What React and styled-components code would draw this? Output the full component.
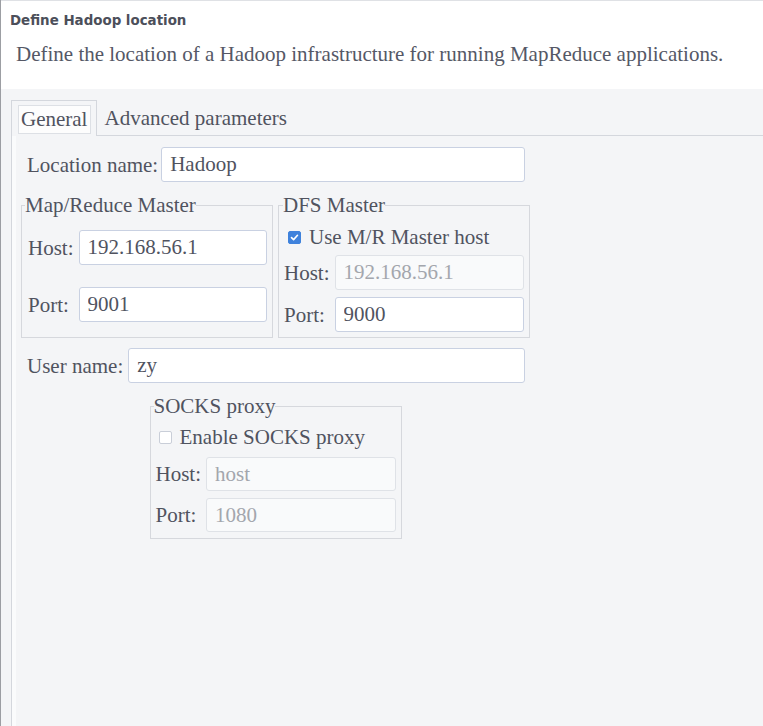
import React from "react";
import styled, { createGlobalStyle } from "styled-components";

const GlobalStyle = createGlobalStyle`
  html, body { margin: 0; padding: 0; background: #f4f5f7; }
  * { box-sizing: border-box; }
`;

const serif = `"Liberation Serif", "Times New Roman", serif`;
const textColor = "#50535f";

const Window = styled.div`
  width: 763px;
  height: 726px;
  overflow: hidden;
  display: flex;
  flex-direction: column;
  background: #f4f5f7;
  border-left: 1px solid #9c9ea3;
  font-family: ${serif};
  color: ${textColor};
`;

const Header = styled.header`
  height: 89px;
  flex: none;
  background: #ffffff;
  border-top: 1px solid #dfe1e5;
  padding: 11px 0 0 9px;
`;

const Title = styled.h1`
  margin: 0;
  font-family: "DejaVu Sans", sans-serif;
  font-weight: bold;
  font-size: 13.4px;
  line-height: 17px;
  color: #4c4f5a;
`;

const Description = styled.p`
  margin: 12px 0 0 6px;
  font-size: 21px;
  line-height: 26px;
  color: #555866;
`;

const Body = styled.div`
  flex: 1;
  padding: 11px 0 0 10px;
  display: flex;
`;

const TabFolder = styled.div`
  flex: 1;
  display: flex;
  flex-direction: column;
  border-left: 1px solid #d4d7dd;
`;

const TabBar = styled.div`
  height: 36px;
  flex: none;
  display: flex;
  align-items: stretch;
  border-bottom: 1px solid #d4d7dd;
`;

const Tab = styled.div`
  display: flex;
  align-items: center;
  font-size: 21px;
  line-height: 24px;
  color: ${textColor};
  ${(p) =>
    p.$active
      ? `
    padding: 3px 5px 2px 6px;
    border-top: 1px solid #d4d7dd;
    border-right: 1px solid #d4d7dd;
    margin-bottom: -1px;
    background: #f4f5f7;
  `
      : `
    padding: 1px 8px 0 7px;
  `}
`;

const FocusBox = styled.span`
  display: flex;
  align-items: center;
  height: 29px;
  padding: 0 3px 0 2px;
  background: #fdfdfd;
  border: 1px solid #dde0e5;
`;

const Panel = styled.div`
  flex: 1;
  border-left: 4px solid #fafbfc;
  padding: 11px 0 0 5px;
`;

const Form = styled.div`
  width: 509px;
  display: flex;
  flex-direction: column;
`;

const FieldRow = styled.div`
  display: grid;
  grid-template-columns: auto 1fr;
  column-gap: ${(p) => p.$gap || 3}px;
  align-items: center;
  padding: 0 5px 0 6px;
  margin-top: ${(p) => p.$top || 0}px;
`;

const Label = styled.label`
  font-size: 21px;
  line-height: 24px;
  white-space: nowrap;
  color: ${textColor};
`;

const Input = styled.input`
  height: ${(p) => p.$h || 35}px;
  width: 100%;
  min-width: 0;
  padding: 0 8px;
  border-radius: 3px;
  font-family: ${serif};
  font-size: 21px;
  outline: none;
  color: ${textColor};
  background: #ffffff;
  border: 1px solid #c9d1e2;
  &:disabled {
    background: #f9fafb;
    border-color: #dfe2e7;
    color: #a3a6ad;
  }
  &::placeholder {
    color: #a3a6ad;
  }
`;

const Groups = styled.div`
  display: grid;
  grid-template-columns: 1fr 1fr;
  column-gap: 5px;
  margin-top: 11px;
`;

const Group = styled.fieldset`
  margin: 0;
  border: 1px solid #d6d8dd;
  padding: ${(p) => p.$pad || "8px 5px 5px 5px"};
  width: ${(p) => (p.$w ? `${p.$w}px` : "auto")};
  ${(p) => (p.$center ? "margin: 11px auto 0;" : "")}
  min-width: 0;
`;

const Legend = styled.legend`
  padding: 0;
  margin-left: ${(p) => p.$shift || 0}px;
  font-size: 21px;
  line-height: 24px;
  color: ${textColor};
`;

const Grid = styled.div`
  display: grid;
  grid-template-columns: auto 1fr;
  column-gap: ${(p) => p.$gap || 5}px;
  row-gap: ${(p) => p.$rowGap || 7}px;
  align-items: center;
`;

const CheckRow = styled.label`
  display: flex;
  align-items: center;
  gap: 8px;
  height: 24px;
  margin: 0 0 ${(p) => p.$below || 6}px ${(p) => p.$indent || 4}px;
  font-size: 21px;
  line-height: 24px;
  color: ${textColor};
`;

const Box = styled.span`
  width: 13px;
  height: 13px;
  flex: none;
  border-radius: 2px;
  display: flex;
  align-items: center;
  justify-content: center;
  background: ${(p) => (p.$checked ? "#3f82dc" : "#ffffff")};
  border: 1px solid ${(p) => (p.$checked ? "#3f82dc" : "#c9ced8")};
`;

function Check({ checked }) {
  return (
    <Box $checked={checked}>
      {checked && (
        <svg width="9" height="9" viewBox="0 0 9 9">
          <path d="M1.5 4.6 L3.6 6.6 L7.5 2.3" fill="none" stroke="#fff" strokeWidth="1.6" strokeLinecap="round" strokeLinejoin="round" />
        </svg>
      )}
    </Box>
  );
}

export default function App() {
  return (
    <>
      <GlobalStyle />
      <Window>
        <Header>
          <Title>Define Hadoop location</Title>
          <Description>Define the location of a Hadoop infrastructure for running MapReduce applications.</Description>
        </Header>
        <Body>
          <TabFolder>
            <TabBar>
              <Tab $active>
                <FocusBox>General</FocusBox>
              </Tab>
              <Tab>Advanced parameters</Tab>
            </TabBar>
            <Panel>
              <Form>
                <FieldRow>
                  <Label>Location name:</Label>
                  <Input defaultValue="Hadoop" />
                </FieldRow>
                <Groups>
                  <Group $pad="13px 5px 15px 6px">
                    <Legend $shift={-3}>Map/Reduce Master</Legend>
                    <Grid $gap={5} $rowGap={22}>
                      <Label>Host:</Label>
                      <Input defaultValue="192.168.56.1" />
                      <Label>Port:</Label>
                      <Input defaultValue="9001" />
                    </Grid>
                  </Group>
                  <Group $pad="8px 5px 5px 5px">
                    <Legend $shift={-1}>DFS Master</Legend>
                    <CheckRow $indent={4}>
                      <Check checked />
                      Use M/R Master host
                    </CheckRow>
                    <Grid $gap={5} $rowGap={7}>
                      <Label>Host:</Label>
                      <Input disabled defaultValue="192.168.56.1" />
                      <Label>Port:</Label>
                      <Input defaultValue="9000" />
                    </Grid>
                  </Group>
                </Groups>
                <FieldRow $top={10} $gap={5}>
                  <Label>User name:</Label>
                  <Input defaultValue="zy" />
                </FieldRow>
                <Group $w={252} $center $pad="7px 5px 6px 5px">
                  <Legend $shift={-2}>SOCKS proxy</Legend>
                  <CheckRow $indent={3} $below={8}>
                    <Check />
                    Enable SOCKS proxy
                  </CheckRow>
                  <Grid $gap={5} $rowGap={7}>
                    <Label>Host:</Label>
                    <Input disabled placeholder="host" $h={34} />
                    <Label>Port:</Label>
                    <Input disabled defaultValue="1080" $h={34} />
                  </Grid>
                </Group>
              </Form>
            </Panel>
          </TabFolder>
        </Body>
      </Window>
    </>
  );
}
